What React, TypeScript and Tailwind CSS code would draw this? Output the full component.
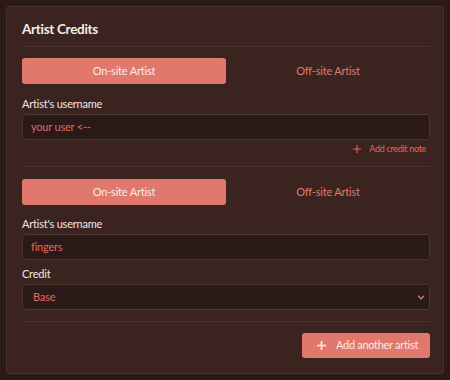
import React from "react";

function Toggle() {
  return (
    <div className="flex h-[26px]">
      <button className="flex-1 rounded-[3px] bg-[#e0786e] text-[11px] tracking-[-0.2px] text-[#fbeae6]">On-site Artist</button>
      <button className="flex-1 text-[11px] tracking-[-0.2px] text-[#e0786e]">Off-site Artist</button>
    </div>
  );
}

function Label({ children }: { children: React.ReactNode }) {
  return <div className="text-[11px] leading-[18px] tracking-[-0.2px] text-[#f1e6e2]">{children}</div>;
}

function Input({ value }: { value: string }) {
  return (
    <div className="flex h-[26px] items-center rounded-[3px] border border-[#4d3530] bg-[#2a1a17] px-[8px] text-[11px] tracking-[-0.2px] text-[#e2675e]">
      {value}
    </div>
  );
}

function Plus({ size, stroke }: { size: number; stroke: number }) {
  return (
    <svg width={size} height={size} viewBox="0 0 10 10">
      <path d="M5 0.5V9.5M0.5 5H9.5" stroke="currentColor" strokeWidth={stroke} strokeLinecap="round" />
    </svg>
  );
}

export default function App() {
  return (
    <div className="h-[380px] w-[450px] bg-[#2a1b17] p-[6px]" style={{ fontFamily: "Lato, 'Open Sans', sans-serif" }}>
      <div className="flex h-[368px] flex-col rounded-[3px] border border-[#4a302b] bg-[#3b2420] pl-[15px] pr-[13px] pt-[12px]">
        <div className="text-[13.5px] font-bold leading-[20px] tracking-[-0.3px] text-[#f6eeea]">Artist Credits</div>
        <div className="mt-[7px] h-px bg-[#4d322c]" />
        <div className="mt-[11px]">
          <Toggle />
        </div>
        <div className="mt-[11px]">
          <Label>Artist's username</Label>
        </div>
        <div className="mt-[1px]">
          <Input value="your user <--" />
        </div>
        <div className="mt-[2px] flex items-center justify-end gap-[8px] pr-[4px] text-[9px] leading-[14px] tracking-[-0.3px] text-[#e2675e]">
          <Plus size={8} stroke={1.4} />
          <span>Add credit note</span>
        </div>
        <div className="mt-[10px] h-px bg-[#4d322c]" />
        <div className="mt-[12px]">
          <Toggle />
        </div>
        <div className="mt-[10px]">
          <Label>Artist's username</Label>
        </div>
        <div className="mt-[1px]">
          <Input value="fingers" />
        </div>
        <div className="mt-[5px]">
          <Label>Credit</Label>
        </div>
        <div className="mt-[1px] flex h-[26px] items-center justify-between rounded-[3px] border border-[#4d3530] bg-[#2a1a17] pl-[10px] pr-[4px] text-[11px] tracking-[-0.2px] text-[#e2675e]">
          <span>Base</span>
          <svg width="8" height="5" viewBox="0 0 9 6">
            <path d="M1 1L4.5 4.5L8 1" stroke="#e0786e" strokeWidth="1.6" fill="none" />
          </svg>
        </div>
        <div className="mt-[11px] h-px bg-[#4d322c]" />
        <div className="mt-[11px] flex justify-end">
          <button className="flex h-[25px] w-[128px] items-center gap-[10px] rounded-[3px] bg-[#e0786e] pl-[15px] text-[11px] tracking-[-0.3px] text-[#fbeae6]">
            <Plus size={9} stroke={1.8} />
            <span>Add another artist</span>
          </button>
        </div>
      </div>
    </div>
  );
}
